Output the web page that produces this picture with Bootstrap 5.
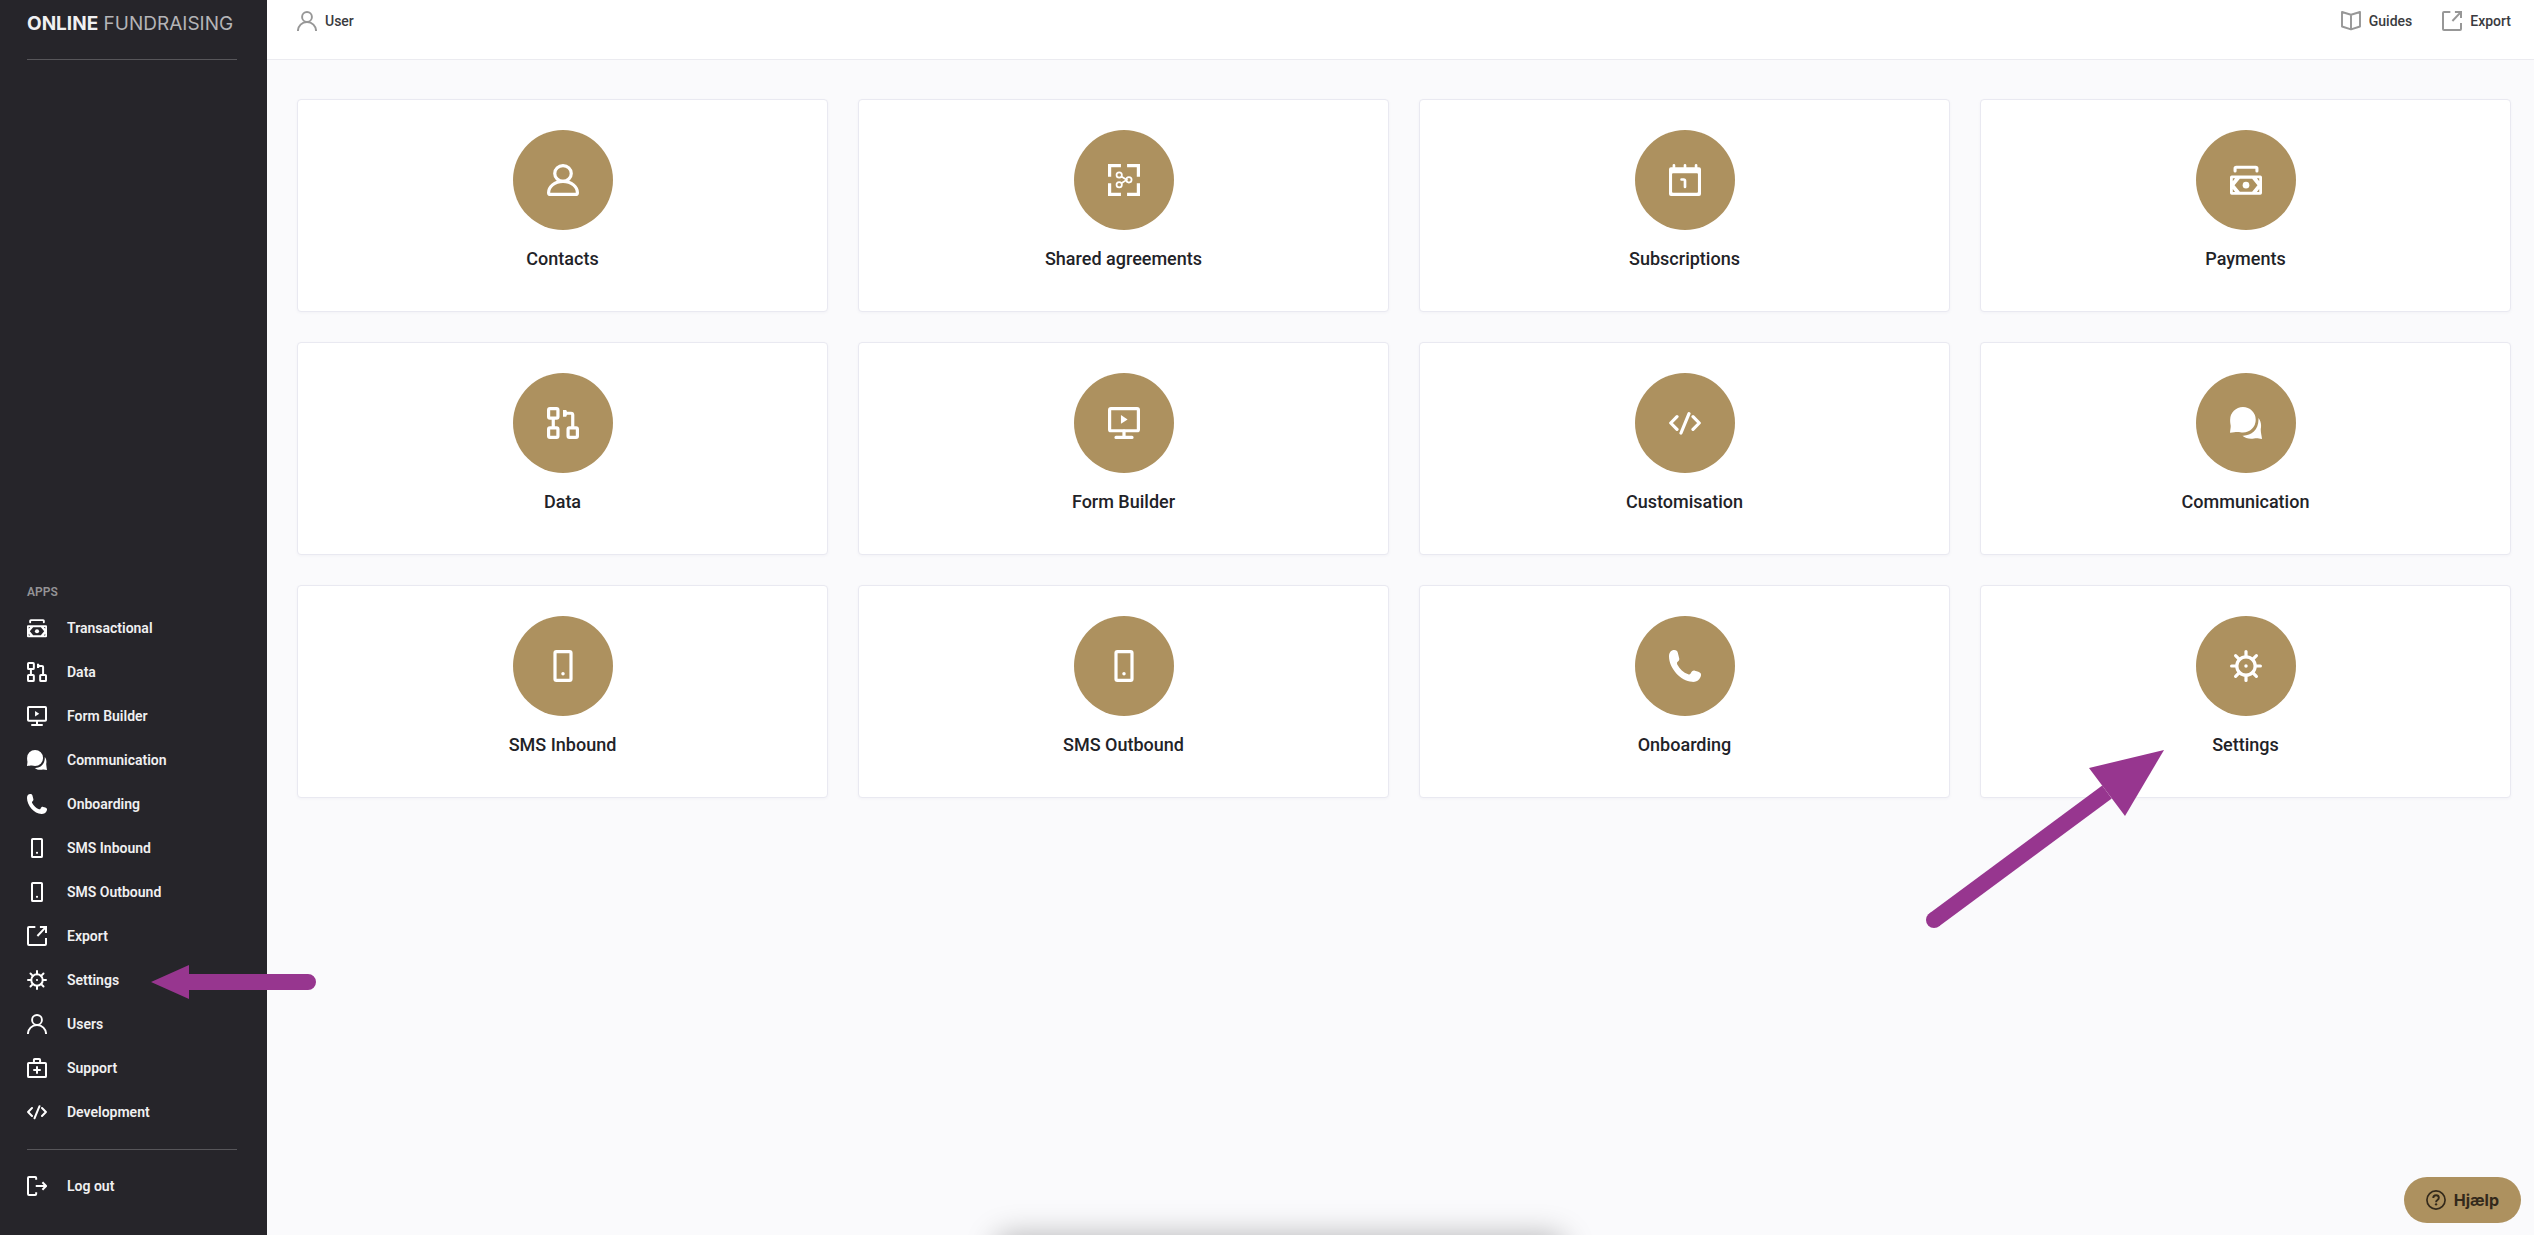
<!DOCTYPE html>
<html lang="en">
<head>
<meta charset="utf-8">
<meta name="viewport" content="width=device-width, initial-scale=1">
<title>Online Fundraising</title>
<link href="https://cdn.jsdelivr.net/npm/bootstrap@5.3.0/dist/css/bootstrap.min.css" rel="stylesheet">
<style>
  body { font-family: Roboto, "Liberation Sans", sans-serif; background: #fafafc; color: #1f2328; }
  a { color: inherit; text-decoration: none; }
  .ico { width: 20px; height: 20px; flex: none; display: block; }
  .ico-lg { width: 32px; height: 32px; }
  .sidebar { width: 267px; background: #26252a; color: #f0f0f1; padding: 0 30px 27px 27px; z-index: 2; }
  .brand { height: 59px; padding-top: 9px; font: 400 19px/30px Inter, "Liberation Sans", sans-serif; color: #b4b4b7; white-space: nowrap; }
  .brand b { font-weight: 700; color: #f0f0f1; }
  .rule { border-top: 1px solid #57565a; }
  .apps-title { font-size: 12px; line-height: 16px; font-weight: 600; color: #949396; margin-bottom: 6px; }
  .side-link { height: 44px; gap: 20px; font-size: 14px; font-weight: 600; }
  .side-link .ico { color: #fff; }
  .side-rule { margin: 15px 0 14px; }
  .topbar { height: 60px; background: #fff; border-bottom: 1px solid #ebebf0; padding: 0 23px 17px 30px; font-size: 14px; font-weight: 500; color: #3a3b40; }
  .topbar .ico { color: #979797; }
  .top-links { gap: 30px; }
  .tiles { padding: 39px 23px 30px 30px; --bs-gutter-x: 30px; }
  .tile-grid { --bs-gutter-x: 30px; --bs-gutter-y: 30px; }
  .tile { border: 1px solid #e9e9f1; border-radius: 4px; background: #fff; padding: 30px 20px 40px; box-shadow: 0 1px 3px rgba(40, 40, 90, .04); }
  .tile-disc { width: 100px; height: 100px; border-radius: 50%; background: #ad915f; color: #fff; }
  .tile-name { font-size: 18px; line-height: 24px; font-weight: 500; margin-top: 17px; }
  .arrow { position: absolute; z-index: 5; fill: #97368f; pointer-events: none; }
  .arrow-left { left: 124px; top: 7px; width: 166px; height: 34px; }
  .arrow-up { left: -58px; top: 162px; width: 244px; height: 184px; }
  .help-btn { position: fixed; right: 13px; bottom: 12px; height: 46px; padding: 0 22px; gap: 8px; border: 0; border-radius: 23px; background: #ad915f; color: #33291b; font: 700 16px/20px Inter, "Liberation Sans", sans-serif; }
  .dock-shadow { position: fixed; left: 50%; bottom: -26px; width: 560px; height: 20px; margin-left: -267px; border-radius: 10px; box-shadow: 0 0 30px 6px rgba(0, 0, 0, .28); }
</style>
<script src="https://cdn.jsdelivr.net/npm/bootstrap@5.3.0/dist/js/bootstrap.bundle.min.js"></script>
</head>
<body>
<svg class="d-none" aria-hidden="true">
  <symbol id="i-user" viewBox="0 0 24 24"><g fill="none" stroke="currentColor" stroke-width="2.300"><circle cx="12" cy="7.100" r="5.900"/><path d="M1.100 24a10.900 10.900 0 0 1 21.800 0"/></g></symbol>
  <symbol id="i-contact" viewBox="0 0 24 24"><g fill="none" stroke="currentColor" stroke-width="2.400"><ellipse cx="12" cy="7.100" rx="6.200" ry="5.900"/><path d="M12 13C5.500 13 1.200 17.300 1.200 21.500q0 1.300 1.300 1.300h19q1.300 0 1.300-1.300C22.800 17.300 18.500 13 12 13z"/></g></symbol>
  <symbol id="i-share" viewBox="0 0 24 24"><g fill="none" stroke="currentColor"><path stroke-width="2.400" d="M9.700 1.200H1.200v8.300M14.300 1.200h8.500v8.300M9.700 22.800H1.200v-8.300M14.300 22.800h8.500v-8.300"/><g stroke-width="1.300"><circle cx="8.400" cy="8.300" r="2"/><circle cx="8.400" cy="15.600" r="2"/><circle cx="15.700" cy="11.900" r="2"/><path d="M10 9.400l4 2.500-4 2.600"/></g></g></symbol>
  <symbol id="i-calendar" viewBox="0 0 24 24"><path fill="currentColor" fill-rule="evenodd" d="M1.500 2.400h21A1.500 1.500 0 0 1 24 3.900v18.600a1.500 1.500 0 0 1-1.500 1.500h-21A1.500 1.500 0 0 1 0 22.500V3.900a1.500 1.500 0 0 1 1.500-1.500zM3 7q-.7 0-.7.700v13.100q0 .700.700.700h18q.7 0 .7-.7V7.700q0-.7-.7-.7z"/><path fill="none" stroke="currentColor" stroke-width="2" stroke-linecap="round" d="M3.700 1v3M12 1v3M20.300 1v3M9.400 11.600h1.600q1 0 1 1v4.600"/></symbol>
  <symbol id="i-money" viewBox="0 0 24 24"><path fill="none" stroke="currentColor" stroke-width="2.300" stroke-linecap="round" d="M3.800 5.200V3.400q0-.9.900-.9h14.600q.9 0 .9.900v1.800"/><path fill="currentColor" fill-rule="evenodd" d="M1.300 8.600h21.400A1.300 1.300 0 0 1 24 9.900v11.900a1.300 1.300 0 0 1-1.300 1.300H1.300A1.300 1.300 0 0 1 0 21.800V9.900a1.300 1.300 0 0 1 1.300-1.300zM7.400 11l-4 4.900 4 4.900h9.200l4-4.900-4-4.900zM2.100 10.700v2.200l1.700-2.200zM21.900 10.700v2.200l-1.700-2.200zM2.100 21v-2.200L3.800 21zM21.900 21v-2.200L20.200 21z"/><circle cx="12" cy="15.900" r="2.500" fill="currentColor"/></symbol>
  <symbol id="i-data" viewBox="0 0 24 24"><g fill="none" stroke="currentColor" stroke-width="2.400"><rect x="1.200" y="1.200" width="7" height="7.200" rx="1"/><rect x="1.200" y="15.600" width="7" height="7.200" rx="1"/><rect x="15.800" y="15.600" width="7" height="7.200" rx="1"/><path d="M4.700 8.500v7M19.300 15.500V6q0-1.300-1.300-1.300h-4.500"/></g><path fill="currentColor" d="M12 2.200h2.400l1 2.500-1 2.600H12z"/></symbol>
  <symbol id="i-monitor" viewBox="0 0 24 24"><g fill="none" stroke="currentColor" stroke-width="2.400"><rect x="1.200" y="1.200" width="21.600" height="16.600" rx="1"/><path d="M12 18v4M6 22.800h12" stroke-linecap="round"/></g><path fill="currentColor" d="M9.700 6l5 3.300-5 3.200z"/></symbol>
  <symbol id="i-chat" viewBox="0 0 24 24"><path fill="currentColor" d="M9.700 0a9.600 9.600 0 0 1 0 19.200c-1.500 0-2.500-.5-4-.5-2 0-3 .4-5.700.6.300-3 .6-4 .5-5.500C.2 12 .1 11 .1 9.700A9.600 9.600 0 0 1 9.700 0zM21.300 8.300c2 2.300 2.300 5.500 1.800 8-.2 2.500.6 5 .9 7.700-2.500-.5-4-.8-6-.4-3.500.6-6.500-.2-8.700-2.100 6.500.4 12.700-4.500 12-13.200z"/></symbol>
  <symbol id="i-phone" viewBox="0 0 24 24"><path fill="currentColor" d="M4 0c1.500 0 2.300.6 2.600 2l1 4c.3 1.200-.1 2-.9 2.600-.8.600-.9 1.200-.5 2.200 1.900 3.600 4.500 6 8.200 7.400.8.300 1.300.1 1.800-.6.800-1.700 1.700-2.400 3.200-2.100 1.800.3 3.700.9 4.300 1.900.7 1.100.2 3.100-1.100 4.600-1.200 1.400-3 2-5.200 1.900C8.500 23.500 0 13.500 0 4.700 0 2 1.500 0 4 0z"/></symbol>
  <symbol id="i-mobile" viewBox="0 0 24 24"><rect x="6" y="1.200" width="12" height="21.600" rx="1" fill="none" stroke="currentColor" stroke-width="2.400"/><circle cx="12" cy="17.800" r="1.300" fill="currentColor"/></symbol>
  <symbol id="i-export" viewBox="0 0 24 24"><path fill="none" stroke="currentColor" stroke-width="2.400" d="M10 1.200H2.400q-1.200 0-1.200 1.200v19.200q0 1.200 1.200 1.200h19.200q1.200 0 1.200-1.200v-7.100M12.500 12L22 2M15.500 1.200h7.300v7.300"/></symbol>
  <symbol id="i-gear" viewBox="0 0 24 24"><g fill="none" stroke="currentColor" stroke-width="2.400"><circle cx="12" cy="12" r="6.900"/><path stroke-linecap="round" d="M12 1.200v3.800M12 19v3.800M1.200 12H5M19 12h3.800M4.200 4.200l2.800 2.800M17 17l2.800 2.800M4.200 19.800L7 17M17 7l2.800-2.800"/></g><circle cx="12" cy="12" r="1.300" fill="currentColor"/></symbol>
  <symbol id="i-kit" viewBox="0 0 24 24"><g fill="none" stroke="currentColor" stroke-width="2.400"><rect x="1.200" y="6" width="21.600" height="16.800" rx="1"/><path d="M8.300 6V2.300q0-1.100 1.100-1.100h5.200q1.100 0 1.100 1.100V6M12 10v9M7.500 14.500h9"/></g></symbol>
  <symbol id="i-code" viewBox="0 0 24 24"><path fill="none" stroke="currentColor" stroke-width="2.400" stroke-linecap="round" stroke-linejoin="round" d="M6 7.200L1.300 12 6 16.800M18 7.200l4.700 4.800-4.700 4.800M15 5L9 19.500"/></symbol>
  <symbol id="i-logout" viewBox="0 0 24 24"><path fill="none" stroke="currentColor" stroke-width="2.400" stroke-linejoin="round" d="M11 4.500V2.400q0-1.200-1.200-1.200H2.400q-1.200 0-1.200 1.200v19.200q0 1.200 1.200 1.200h7.400q1.200 0 1.200-1.200v-2.100M10.500 12h12M18.500 7.500L22.900 12l-4.400 4.500"/></symbol>
  <symbol id="i-book" viewBox="0 0 24 24"><path fill="none" stroke="currentColor" stroke-width="2.300" stroke-linejoin="round" d="M12 4.500L1.200 1.200v17.400l10.800 3.500 10.800-3.500V1.200zM12 4.500V22"/></symbol>
  <symbol id="i-help" viewBox="0 0 24 24"><g fill="none" stroke="currentColor" stroke-width="2"><circle cx="12" cy="12" r="10.900"/><path stroke-width="2.300" d="M8.700 9.500q.1-3.300 3.400-3.300 3.300 0 3.300 3 0 1.600-1.700 2.800-1.600 1-1.600 2.700"/></g><circle cx="12.100" cy="17.200" r="1.400" fill="currentColor"/></symbol>
</svg>

<div class="d-flex min-vh-100">
  <aside class="sidebar d-flex flex-column flex-shrink-0 position-relative">
    <a href="#" class="brand d-block"><b>ONLINE</b> FUNDRAISING</a>
    <div class="rule"></div>
    <nav class="mt-auto" aria-label="Apps">
      <div class="apps-title">APPS</div>
      <a href="#" class="side-link d-flex align-items-center"><svg class="ico"><use href="#i-money"/></svg>Transactional</a>
      <a href="#" class="side-link d-flex align-items-center"><svg class="ico"><use href="#i-data"/></svg>Data</a>
      <a href="#" class="side-link d-flex align-items-center"><svg class="ico"><use href="#i-monitor"/></svg>Form Builder</a>
      <a href="#" class="side-link d-flex align-items-center"><svg class="ico"><use href="#i-chat"/></svg>Communication</a>
      <a href="#" class="side-link d-flex align-items-center"><svg class="ico"><use href="#i-phone"/></svg>Onboarding</a>
      <a href="#" class="side-link d-flex align-items-center"><svg class="ico"><use href="#i-mobile"/></svg>SMS Inbound</a>
      <a href="#" class="side-link d-flex align-items-center"><svg class="ico"><use href="#i-mobile"/></svg>SMS Outbound</a>
      <a href="#" class="side-link d-flex align-items-center"><svg class="ico"><use href="#i-export"/></svg>Export</a>
      <a href="#" class="side-link d-flex align-items-center position-relative"><svg class="ico"><use href="#i-gear"/></svg>Settings
        <svg class="arrow arrow-left" viewBox="0 0 166 34" aria-hidden="true"><path d="M0 17L38 0v9h119a8 8 0 0 1 0 16H38v9z"/></svg>
      </a>
      <a href="#" class="side-link d-flex align-items-center"><svg class="ico"><use href="#i-user"/></svg>Users</a>
      <a href="#" class="side-link d-flex align-items-center"><svg class="ico"><use href="#i-kit"/></svg>Support</a>
      <a href="#" class="side-link d-flex align-items-center"><svg class="ico"><use href="#i-code"/></svg>Development</a>
      <div class="rule side-rule"></div>
      <a href="#" class="side-link d-flex align-items-center"><svg class="ico"><use href="#i-logout"/></svg>Log out</a>
    </nav>
  </aside>

  <div class="flex-grow-1">
    <header class="topbar d-flex align-items-center justify-content-between">
      <a href="#" class="d-flex align-items-center gap-2"><svg class="ico"><use href="#i-user"/></svg>User</a>
      <div class="top-links d-flex">
        <a href="#" class="d-flex align-items-center gap-2"><svg class="ico"><use href="#i-book"/></svg>Guides</a>
        <a href="#" class="d-flex align-items-center gap-2"><svg class="ico"><use href="#i-export"/></svg>Export</a>
      </div>
    </header>
    <main class="tiles">
      <div class="row row-cols-1 row-cols-sm-2 row-cols-lg-4 tile-grid">
        <div class="col"><a href="#" class="tile d-flex flex-column align-items-center"><span class="tile-disc d-flex align-items-center justify-content-center"><svg class="ico ico-lg"><use href="#i-contact"/></svg></span><span class="tile-name">Contacts</span></a></div>
        <div class="col"><a href="#" class="tile d-flex flex-column align-items-center"><span class="tile-disc d-flex align-items-center justify-content-center"><svg class="ico ico-lg"><use href="#i-share"/></svg></span><span class="tile-name">Shared agreements</span></a></div>
        <div class="col"><a href="#" class="tile d-flex flex-column align-items-center"><span class="tile-disc d-flex align-items-center justify-content-center"><svg class="ico ico-lg"><use href="#i-calendar"/></svg></span><span class="tile-name">Subscriptions</span></a></div>
        <div class="col"><a href="#" class="tile d-flex flex-column align-items-center"><span class="tile-disc d-flex align-items-center justify-content-center"><svg class="ico ico-lg"><use href="#i-money"/></svg></span><span class="tile-name">Payments</span></a></div>
        <div class="col"><a href="#" class="tile d-flex flex-column align-items-center"><span class="tile-disc d-flex align-items-center justify-content-center"><svg class="ico ico-lg"><use href="#i-data"/></svg></span><span class="tile-name">Data</span></a></div>
        <div class="col"><a href="#" class="tile d-flex flex-column align-items-center"><span class="tile-disc d-flex align-items-center justify-content-center"><svg class="ico ico-lg"><use href="#i-monitor"/></svg></span><span class="tile-name">Form Builder</span></a></div>
        <div class="col"><a href="#" class="tile d-flex flex-column align-items-center"><span class="tile-disc d-flex align-items-center justify-content-center"><svg class="ico ico-lg"><use href="#i-code"/></svg></span><span class="tile-name">Customisation</span></a></div>
        <div class="col"><a href="#" class="tile d-flex flex-column align-items-center"><span class="tile-disc d-flex align-items-center justify-content-center"><svg class="ico ico-lg"><use href="#i-chat"/></svg></span><span class="tile-name">Communication</span></a></div>
        <div class="col"><a href="#" class="tile d-flex flex-column align-items-center"><span class="tile-disc d-flex align-items-center justify-content-center"><svg class="ico ico-lg"><use href="#i-mobile"/></svg></span><span class="tile-name">SMS Inbound</span></a></div>
        <div class="col"><a href="#" class="tile d-flex flex-column align-items-center"><span class="tile-disc d-flex align-items-center justify-content-center"><svg class="ico ico-lg"><use href="#i-mobile"/></svg></span><span class="tile-name">SMS Outbound</span></a></div>
        <div class="col"><a href="#" class="tile d-flex flex-column align-items-center"><span class="tile-disc d-flex align-items-center justify-content-center"><svg class="ico ico-lg"><use href="#i-phone"/></svg></span><span class="tile-name">Onboarding</span></a></div>
        <div class="col"><a href="#" class="tile d-flex flex-column align-items-center position-relative"><span class="tile-disc d-flex align-items-center justify-content-center"><svg class="ico ico-lg"><use href="#i-gear"/></svg></span><span class="tile-name">Settings</span>
          <svg class="arrow arrow-up" viewBox="0 0 244 184" aria-hidden="true"><path d="M241 2L166 20l36 48z"/><path d="M11 172L184 44" fill="none" stroke="#97368f" stroke-width="16"/><circle cx="11" cy="172" r="8"/></svg>
        </a></div>
      </div>
    </main>
  </div>
</div>
<div class="dock-shadow"></div>
<button type="button" class="help-btn d-flex align-items-center"><svg class="ico"><use href="#i-help"/></svg>Hjælp</button>
</body>
</html>
